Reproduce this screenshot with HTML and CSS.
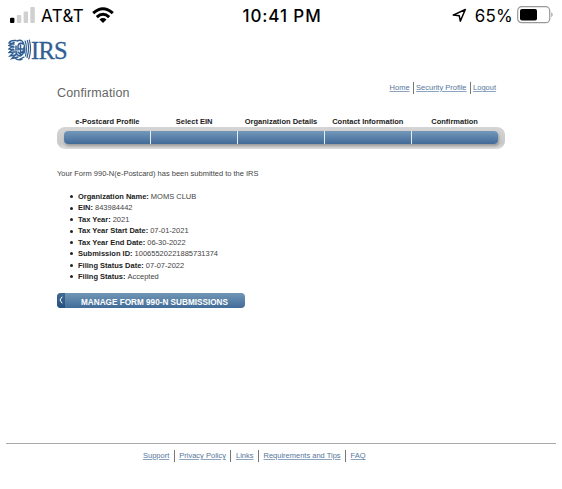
FILE: index.html
```html
<!DOCTYPE html>
<html lang="en">
<head>
<meta charset="utf-8">
<title>Confirmation</title>
<link rel="stylesheet" href="styles.css">
</head>
<body>
<header class="status">
  <div class="carrier">
    <svg class="signal" width="26" height="17" viewBox="0 0 26 17"><rect x="0" y="10.8" width="4.4" height="5.2" rx="1" fill="#000"/><g fill="#d0d0d0"><rect x="6.8" y="8" width="4.5" height="8" rx="1"/><rect x="13.6" y="4.5" width="4.5" height="11.5" rx="1"/><rect x="20.3" y="0" width="4.5" height="16" rx="1"/></g></svg>
    <span class="network">AT&amp;T</span>
    <svg class="wifi" width="22" height="17" viewBox="0 0 22 17"><g fill="none" stroke="#000" stroke-width="3"><path d="M1.2 6.2Q11-2.7 20.8 6.2"/><path d="M4.8 10.2Q11 4.4 17.2 10.2"/></g><path d="M7.5 12.4Q11 9.6 14.5 12.4L11 16Z"/></svg>
  </div>
  <div class="clock">10:41 PM</div>
  <div class="power">
    <svg class="location" width="15" height="15" viewBox="0 0 15 15"><path d="M1.2 7.1L13.3 1.5L8.3 13.2L7.3 7.8Z" fill="none" stroke="#000" stroke-width="1.5" stroke-linejoin="round"/></svg>
    <span class="percent">65%</span>
    <svg class="battery" width="37" height="18" viewBox="0 0 37 18"><rect x=".7" y=".7" width="32" height="16" rx="4" fill="none" stroke="#999" stroke-width="1.2"/><rect x="3" y="3" width="17" height="11.5" rx="2"/><path d="M34.4 6Q36.8 8.7 34.4 11.4Z" fill="#999"/></svg>
  </div>
</header>
<div class="brand">
  <svg class="eagle" width="24" height="22" viewBox="0 0 24 22" fill="none" stroke="#315f93" stroke-width="1.5" stroke-linecap="round"><path d="M8 1.5Q2 1 1 4L6 5M6 3.5L1 6.5L6 8M5 7L.9 10L6 11M5 10L1 13.5L7 13M6 13L2 17L8 16M8 15L4 19.5L10 18M7 19Q10 22 14 20" /><path d="M9 2Q12 .5 14 2Q15.5 3 15 5L12.5 4Q10 5 10 7V11M8 7V11M8 12Q8 16 12 17Q15 16 16 12V8M10 10H15M12.5 6V17M10 13L12 15L15 12"/><path stroke-width="1.2" d="M17.1 2Q19.5 8 17.5 17M19.3 1.5Q22 9 19 18.5M21.3 1Q24 10 20.8 20M15.5 4Q17.5 8 16.2 14M16 18L12 20"/></svg>
  <span class="wordmark">IRS</span>
</div>
<main>
  <div class="heading">
    <h1>Confirmation</h1>
    <nav class="links top"><a>Home</a><i></i><a>Security Profile</a><i></i><a>Logout</a></nav>
  </div>
  <div class="labels"><b>e-Postcard Profile</b><b>Select EIN</b><b>Organization Details</b><b>Contact Information</b><b>Confirmation</b></div>
  <div class="track"><div class="steps"><span></span><span></span><span></span><span></span><span></span></div></div>
  <p class="message">Your Form 990-N(e-Postcard) has been submitted to the IRS</p>
  <ul>
    <li><b>Organization Name:</b> MOMS CLUB</li>
    <li><b>EIN:</b> 843984442</li>
    <li><b>Tax Year:</b> 2021</li>
    <li><b>Tax Year Start Date:</b> 07-01-2021</li>
    <li><b>Tax Year End Date:</b> 06-30-2022</li>
    <li><b>Submission ID:</b> 10065520221885731374</li>
    <li><b>Filing Status Date:</b> 07-07-2022</li>
    <li><b>Filing Status:</b> Accepted</li>
  </ul>
  <button class="manage"><span class="back"><svg width="4" height="8" viewBox="0 0 4 8"><path d="M3.2.7L1 4L3.2 7.3" fill="none" stroke="#fff"/></svg></span><span class="caption">MANAGE FORM 990-N SUBMISSIONS</span></button>
</main>
<footer><nav class="links bottom"><a>Support</a><i></i><a>Privacy Policy</a><i></i><a>Links</a><i></i><a>Requirements and Tips</a><i></i><a>FAQ</a></nav></footer>
</body>
</html>
```
FILE: styles.css
```css
* { box-sizing: border-box; }
body { margin: 0; height: 489px; overflow: hidden; background: #fff; font: 7.5px/11.5px "Liberation Sans", Arial, sans-serif; color: #444; display: flex; flex-direction: column; }
svg { display: block; flex: none; }
.status { height: 32px; flex: none; padding: 0 8px 0 10px; display: grid; grid-template-columns: 1fr auto 1fr; align-items: center; font: 17px/30px Inter, sans-serif; color: #000; }
.carrier, .power { display: flex; align-items: center; }
.carrier svg, .power svg { position: relative; top: -1px; }
.network { margin-left: 5px; width: 46px; letter-spacing: .4px; white-space: nowrap; }
.wifi { margin-left: 5px; }
.clock { font-weight: 500; letter-spacing: .9px; }
.power { justify-content: flex-end; }
.percent { margin: 0 4px 0 8px; letter-spacing: .2px; }
.brand { height: 34px; flex: none; padding: 7px 0 0 8px; display: flex; align-items: flex-start; }
.wordmark { color: #315f93; font: 24.5px/23px "Liberation Serif", serif; letter-spacing: -.7px; margin-left: -1px; -webkit-text-stroke: .3px #315f93; }
main { width: 448px; margin-left: 57px; display: flex; flex-direction: column; }
.heading { height: 50px; display: flex; justify-content: space-between; padding-right: 9px; }
h1 { margin: 18px 0 0; font-size: 12.5px; letter-spacing: .15px; line-height: 18px; font-weight: 400; color: #666; }
.links { display: flex; height: 12px; color: #56779c; line-height: 12px; white-space: nowrap; }
.links a { text-decoration: underline; text-decoration-color: #8ba5c0; text-underline-offset: 1px; }
.links i { width: 1px; background: #777; margin: 0 2.5px 0 3px; }
.bottom i { margin: 0 4.5px; }
.top { margin-top: 16px; }
.labels { height: 11px; padding: 0 7px; display: grid; grid-template-columns: repeat(5, 1fr); text-align: center; color: #222; white-space: nowrap; }
.track { height: 22px; padding: 4px 7px 5px; border-radius: 8px; background: linear-gradient(#d5d5d5, #c9c9c9 75%, #dedede); }
.steps { display: grid; grid-template-columns: repeat(5, 1fr); gap: 1.5px; height: 13px; border-radius: 4px; overflow: hidden; background: #e5edf3; box-shadow: 1px 2px 3px #999; }
.steps span { background: linear-gradient(#7398b9, #416a98); }
.message { margin: 19px 0 0; height: 12px; }
ul { margin: 11px 0 0; padding: 0 0 0 22px; list-style: none; }
li { height: 11.45px; display: flex; gap: 2px; align-items: center; white-space: nowrap; }
li::before { content: ""; width: 3px; height: 3px; border-radius: 50%; background: #222; margin: 0 3px 0 -9px; }
li b { color: #222; }
.manage { margin: 10px 0 0; padding: 0; width: 188px; height: 15.5px; border: 0; border-radius: 4px; overflow: hidden; display: flex; background: linear-gradient(#7197b6, #416c99); color: #fff; font: bold 8.2px/20px "Liberation Sans", Arial, sans-serif; }
.back { width: 8px; height: 16px; padding: 3px 2px; background: linear-gradient(#416b93, #234e7c); }
.caption { width: 180px; white-space: nowrap; text-align: left; padding-left: 13px; margin-left: 3px; }
footer { margin: auto 6px 0; height: 46px; flex: none; border-top: 1px solid #aaa; padding: 6px 0 0 137px; }
```
